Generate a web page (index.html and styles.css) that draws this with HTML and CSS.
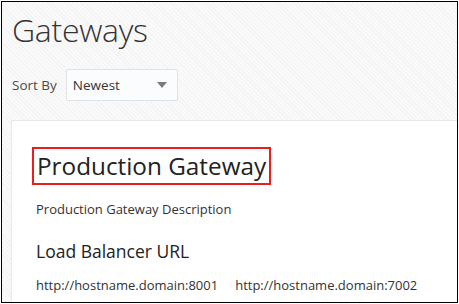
FILE: index.html
```html
<!DOCTYPE html>
<html lang="en">
<head>
    <meta charset="UTF-8">
    <meta name="viewport" content="width=device-width, initial-scale=1.0">
    <title>Gateways</title>
    <link rel="stylesheet" href="styles.css">
</head>
<body>
    <div class="frame">
        <h1 class="page-title">Gateways</h1>
        <div class="sort-row">
            <span class="sort-label">Sort By</span>
            <div class="select">
                <span class="select-value">Newest</span>
                <span class="select-arrow"></span>
            </div>
        </div>
        <div class="card">
            <div class="card-title">Production Gateway</div>
            <p class="card-desc">Production Gateway Description</p>
            <h2 class="section-title">Load Balancer URL</h2>
            <div class="urls">
                <span class="url">http://hostname.domain:8001</span>
                <span class="url">http://hostname.domain:7002</span>
            </div>
        </div>
    </div>
</body>
</html>
```

FILE: styles.css
```css
body {
    margin: 0;
    padding: 1px;
    background: #ffffff;
    font-family: "Open Sans", "Noto Sans", Arial, sans-serif;
    color: #333333;
}
.frame {
    width: 445px;
    height: 300px;
    padding-left: 10px;
    border: 1px solid #000000;
    overflow: hidden;
    background-color: #f8f8f8;
    background-image: repeating-linear-gradient(45deg, #f3f3f3 0, #f3f3f3 1px, #fafafa 1px, #fafafa 3px);
}
.page-title {
    margin: 0;
    padding-top: 8px;
    font-size: 32px;
    font-weight: 300;
    line-height: 40px;
    color: #333333;
    letter-spacing: -0.3px;
}
.sort-row {
    display: flex;
    align-items: center;
    gap: 9px;
    margin-top: 19px;
}
.sort-label {
    font-size: 13.5px;
    color: #4a4a4a;
}
.select {
    display: flex;
    align-items: center;
    justify-content: space-between;
    width: 112px;
    height: 32px;
    padding: 0 10px 0 6px;
    box-sizing: border-box;
    background: #fbfcfd;
    border: 1px solid #dfe3e6;
    border-radius: 2px;
}
.select-value {
    font-size: 13.5px;
    color: #333333;
}
.select-arrow {
    width: 0;
    height: 0;
    border-left: 5px solid transparent;
    border-right: 5px solid transparent;
    border-top: 6px solid #7b7b7b;
}
.card {
    margin-top: 19px;
    margin-left: -1px;
    width: 480px;
    height: 200px;
    background: #ffffff;
    border: 1px solid #e8e8e8;
    padding: 26px 0 0 20px;
    box-sizing: border-box;
}
.card-title {
    display: inline-block;
    border: 2px solid #ee1c1c;
    padding: 0 3px;
    font-size: 24.3px;
    line-height: 34px;
    color: #222222;
}
.card-desc {
    margin: 15px 0 0 4px;
    font-size: 13px;
    color: #333333;
}
.section-title {
    margin: 21px 0 0 4px;
    font-size: 17.5px;
    font-weight: 400;
    color: #222222;
}
.urls {
    display: flex;
    gap: 17px;
    margin: 13px 0 0 4px;
    font-size: 13px;
}
```
